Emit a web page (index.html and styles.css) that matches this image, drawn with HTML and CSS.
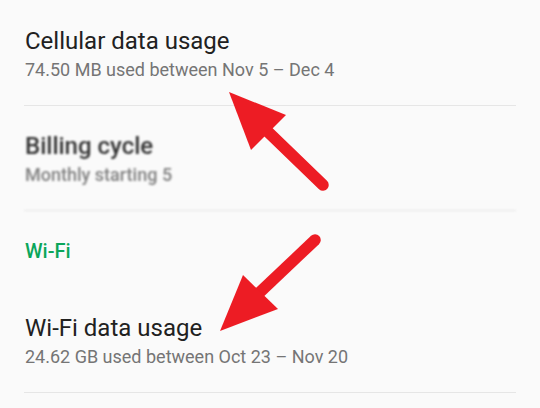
FILE: index.html
```html
<!DOCTYPE HTML>
<html>
	<head>
		<meta charset="utf-8">
		<title>Data usage</title>
		<link rel="stylesheet" href="styles.css">
	</head>

	<body>
		<div class="screen">
			<div class="pref">
				<div class="pref-title">Cellular data usage</div>
				<div class="pref-summary">74.50 MB used between Nov 5 – Dec 4</div>
			</div>
			<div class="pref blurred">
				<div class="pref-title">Billing cycle</div>
				<div class="pref-summary">Monthly starting 5</div>
			</div>
			<div class="category">Wi-Fi</div>
			<div class="pref">
				<div class="pref-title">Wi-Fi data usage</div>
				<div class="pref-summary">24.62 GB used between Oct 23 – Nov 20</div>
			</div>

			<!-- annotation arrows drawn over the screenshot -->
			<svg class="arrows" width="540" height="408" viewBox="0 0 540 408">
				<line x1="264" y1="128" x2="323" y2="185" stroke="#ed1c24" stroke-width="11.5" stroke-linecap="round"/>
				<polygon points="229,92 286,115 251,150" fill="#ed1c24"/>
				<line x1="258" y1="294" x2="315" y2="240" stroke="#ed1c24" stroke-width="11.5" stroke-linecap="round"/>
				<polygon points="220,331 243,275 278,309" fill="#ed1c24"/>
			</svg>
		</div>
	</body>
</html>
```

FILE: styles.css
```css
html, body{
	margin: 0;
	background-color: #fafafa;
}
.screen{
	position: relative;
	width: 540px;
	height: 408px;
	padding-top: 1px;
	box-sizing: border-box;
	overflow: hidden;
	font-family: Roboto, "Liberation Sans", sans-serif;
}
.pref{
	box-sizing: border-box;
	margin: 0 24px;
	padding: 24px 0 0 1px;
	border-bottom: 1px solid #e6e6e6;
	height: 105px;
}
.pref-title{
	font-size: 24px;
	line-height: 32px;
	color: #212121;
}
.pref-summary{
	font-size: 18px;
	line-height: 26px;
	color: #757575;
}
.blurred{
	filter: blur(1px);
}
.blurred .pref-title{
	color: #333333;
	font-weight: 500;
}
.blurred .pref-summary{
	color: #808080;
	font-weight: 500;
}
.category{
	height: 77px;
	box-sizing: border-box;
	padding: 26px 0 0 25px;
	font-size: 20px;
	line-height: 28px;
	font-weight: 500;
	color: #0ba65a;
}
.arrows{
	position: absolute;
	left: 0;
	top: 0;
}
```
